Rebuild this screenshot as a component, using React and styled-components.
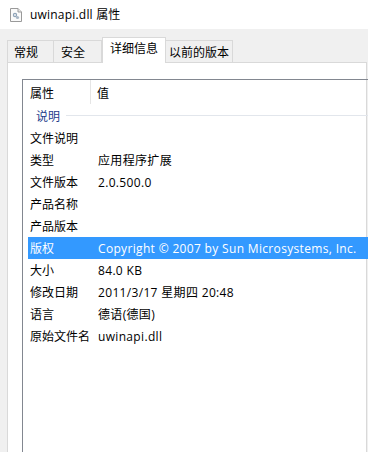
import React from "react";
import styled, { createGlobalStyle } from "styled-components";

const Global = createGlobalStyle`
  html, body { margin: 0; padding: 0; background: #f0f0f0; }
  body { font-family: "Open Sans", "Noto Sans CJK SC", sans-serif; font-size: 12px; color: #000; }
`;

const Window = styled.div`
  width: 368px;
  height: 452px;
  overflow: hidden;
  background: #f0f0f0;
  display: flex;
  flex-direction: column;
`;

const TitleBar = styled.div`
  height: 29px;
  background: #fff;
  display: flex;
  align-items: center;
  padding-left: 10px;
  gap: 8px;
  flex-shrink: 0;
`;

const Title = styled.span`
  font-size: 12px;
  line-height: 14px;
  letter-spacing: 0.2px;
  color: #000;
`;

const Body = styled.div`
  flex: 1;
  display: flex;
  flex-direction: column;
  padding-left: 7px;
`;

const TabStrip = styled.div`
  height: 33px;
  display: flex;
  align-items: flex-end;
  flex-shrink: 0;
`;

const Tab = styled.div`
  box-sizing: border-box;
  width: ${(p) => p.$w}px;
  height: ${(p) => (p.$active ? 26 : 22)}px;
  margin-bottom: ${(p) => (p.$active ? -1 : 0)}px;
  padding-left: ${(p) => p.$pl}px;
  padding-top: ${(p) => (p.$active ? 3 : 4)}px;
  background: ${(p) => (p.$active ? "#fff" : "#f0f0f0")};
  border: 1px solid #d9d9d9;
  border-bottom: none;
  border-left-width: ${(p) => (p.$noLeft ? 0 : 1)}px;
  position: relative;
  z-index: ${(p) => (p.$active ? 1 : 0)};
  line-height: 16px;
  white-space: nowrap;
`;

const Panel = styled.div`
  flex: 1;
  background: #fff;
  border-top: 1px solid #d9d9d9;
  border-left: 1px solid #d9d9d9;
  border-right: 1px solid #d9d9d9;
  margin-right: 1px;
  padding: 16px 0 0 14px;
  display: flex;
  flex-direction: column;
`;

const ListView = styled.div`
  flex: 1;
  border-top: 1px solid #828790;
  border-left: 1px solid #828790;
  margin-right: -2px;
  display: flex;
  flex-direction: column;
`;

const Header = styled.div`
  height: 24px;
  display: flex;
  align-items: stretch;
`;

const HeaderCell = styled.div`
  width: ${(p) => (p.$w ? `${p.$w}px` : "auto")};
  flex: ${(p) => (p.$w ? "none" : 1)};
  box-sizing: border-box;
  padding-left: ${(p) => p.$pl}px;
  padding-top: 1px;
  display: flex;
  align-items: center;
  border-right: ${(p) => (p.$sep ? "1px solid #e5e5e5" : "none")};
`;

const GroupRow = styled.div`
  height: 23px;
  display: flex;
  align-items: center;
  padding-left: 13px;
  gap: 6px;
`;

const GroupLabel = styled.span`
  color: #1e3c8c;
`;

const GroupLine = styled.div`
  flex: 1;
  height: 1px;
  background: #e2e6ec;
`;

const Row = styled.div`
  height: 22px;
  margin-left: 5px;
  display: flex;
  align-items: center;
  background: ${(p) => (p.$selected ? "#3399ff" : "transparent")};
  color: ${(p) => (p.$selected ? "#fff" : "#000")};
  white-space: nowrap;
`;

const Cell = styled.div`
  box-sizing: border-box;
  width: ${(p) => (p.$w ? `${p.$w}px` : "auto")};
  flex: ${(p) => (p.$w ? "none" : 1)};
  padding-left: 2px;
  letter-spacing: ${(p) => (p.$w ? 0 : 0.33)}px;
`;

function FileIcon() {
  return (
    <svg width="12" height="14" viewBox="0 0 12 14">
      <path d="M0.5 0.5 H8 L11.5 4 V13.5 H0.5 Z" fill="#fafafa" stroke="#9a9a9a" />
      <path d="M8 0.5 V4 H11.5" fill="#e6e6e6" stroke="#9a9a9a" />
      <circle cx="5" cy="7" r="2.2" fill="#8fa3b8" />
      <circle cx="5" cy="7" r="0.9" fill="#fafafa" />
      <circle cx="7.5" cy="9.5" r="1.6" fill="#a9b7c6" />
    </svg>
  );
}

const tabs = [
  { label: "常规", w: 47, pl: 6 },
  { label: "安全", w: 48, pl: 7, noLeft: true },
  { label: "详细信息", w: 64, pl: 7, active: true },
  { label: "以前的版本", w: 67, pl: 3, noLeft: true },
];

const rows = [
  ["文件说明", ""],
  ["类型", "应用程序扩展"],
  ["文件版本", "2.0.500.0"],
  ["产品名称", ""],
  ["产品版本", ""],
  ["版权", "Copyright © 2007 by Sun Microsystems, Inc.", true],
  ["大小", "84.0 KB"],
  ["修改日期", "2011/3/17 星期四 20:48"],
  ["语言", "德语(德国)"],
  ["原始文件名", "uwinapi.dll"],
];

export default function App() {
  return (
    <>
      <Global />
      <Window>
        <TitleBar>
          <FileIcon />
          <Title>uwinapi.dll 属性</Title>
        </TitleBar>
        <Body>
          <TabStrip>
            {tabs.map((t) => (
              <Tab key={t.label} $w={t.w} $pl={t.pl} $active={t.active} $noLeft={t.noLeft}>
                {t.label}
              </Tab>
            ))}
          </TabStrip>
          <Panel>
            <ListView>
              <Header>
                <HeaderCell $w={68} $pl={7} $sep>属性</HeaderCell>
                <HeaderCell $pl={6}>值</HeaderCell>
              </Header>
              <GroupRow>
                <GroupLabel>说明</GroupLabel>
                <GroupLine />
              </GroupRow>
              {rows.map(([k, v, sel]) => (
                <Row key={k} $selected={sel}>
                  <Cell $w={68}>{k}</Cell>
                  <Cell>{v}</Cell>
                </Row>
              ))}
            </ListView>
          </Panel>
        </Body>
      </Window>
    </>
  );
}
